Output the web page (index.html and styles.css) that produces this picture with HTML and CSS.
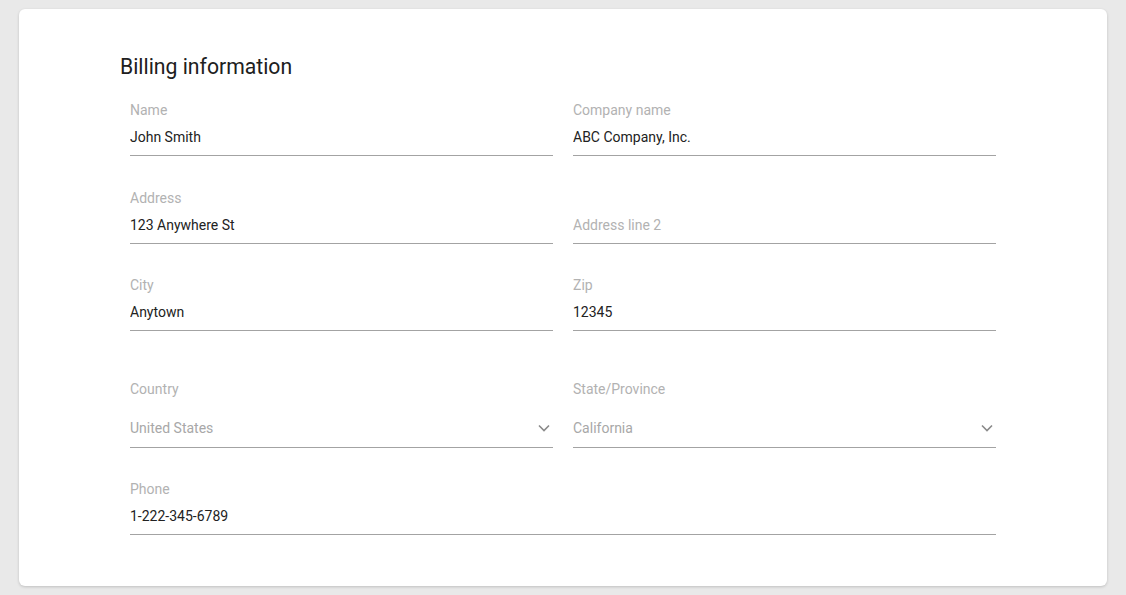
FILE: index.html
```html
<!DOCTYPE html>
<html lang="en">
<head>
    <meta charset="UTF-8">
    <meta name="viewport" content="width=device-width, initial-scale=1.0">
    <title>Billing information</title>
    <link rel="stylesheet" href="styles.css">
</head>
<body>
    <main class="card">
        <h1 class="card_title">Billing information</h1>
        <form class="fields">
            <label class="field">
                <span class="field_label">Name</span>
                <input class="field_input" type="text" value="John Smith">
            </label>
            <label class="field">
                <span class="field_label">Company name</span>
                <input class="field_input" type="text" value="ABC Company, Inc.">
            </label>

            <label class="field">
                <span class="field_label">Address</span>
                <input class="field_input" type="text" value="123 Anywhere St">
            </label>
            <label class="field">
                <span class="field_label">&nbsp;</span>
                <input class="field_input" type="text" placeholder="Address line 2">
            </label>

            <label class="field">
                <span class="field_label">City</span>
                <input class="field_input" type="text" value="Anytown">
            </label>
            <label class="field">
                <span class="field_label">Zip</span>
                <input class="field_input" type="text" value="12345">
            </label>

            <div class="field select">
                <span class="field_label">Country</span>
                <div class="select_value">
                    <span>United States</span>
                    <svg class="chevron" width="12" height="8" viewBox="0 0 12 8"><path d="M1 1.5l5 5 5-5" fill="none" stroke="#8a8a8a" stroke-width="1.6"/></svg>
                </div>
            </div>
            <div class="field select">
                <span class="field_label">State/Province</span>
                <div class="select_value">
                    <span>California</span>
                    <svg class="chevron" width="12" height="8" viewBox="0 0 12 8"><path d="M1 1.5l5 5 5-5" fill="none" stroke="#8a8a8a" stroke-width="1.6"/></svg>
                </div>
            </div>

            <label class="field wide">
                <span class="field_label">Phone</span>
                <input class="field_input" type="text" value="1-222-345-6789">
            </label>
        </form>
    </main>
</body>
</html>
```

FILE: styles.css
```css
*{
    margin: 0;
    padding: 0;
    box-sizing: border-box;
}

body{
    background-color: #e9e9e9;
    font-family: Roboto, "Liberation Sans", sans-serif;
    padding: 9px 19px;
}

.card{
    background-color: #fff;
    border-radius: 6px;
    box-shadow: 0 1px 3px rgba(0, 0, 0, 0.18);
    height: 577px;
    padding: 46px 111px 0 111px;
}

.card_title{
    font-size: 21.2px;
    font-weight: 400;
    line-height: 24px;
    color: #202020;
    margin-left: -10px;
    margin-bottom: 21px;
}

.fields{
    display: grid;
    grid-template-columns: 1fr 1fr;
    column-gap: 20px;
    row-gap: 31.5px;
}

.field{
    display: block;
}

.field.wide{
    grid-column: 1 / 3;
}

.field_label{
    display: block;
    font-size: 14px;
    line-height: 20px;
    color: #b2b2b2;
}

.field_input{
    display: block;
    width: 100%;
    border: none;
    border-bottom: 1px solid #a3a3a3;
    outline: none;
    background: transparent;
    font-family: inherit;
    font-size: 14px;
    line-height: 20px;
    height: 36px;
    padding: 7px 0 8px 0;
    color: #222;
}

.field_input::placeholder{
    color: #b2b2b2;
}

.select{
    padding-top: 16px;
}

.select_value{
    display: flex;
    justify-content: space-between;
    align-items: center;
    font-size: 14px;
    line-height: 20px;
    color: #a8a8a8;
    padding: 19px 3px 9px 0;
    border-bottom: 1px solid #a3a3a3;
}
```
